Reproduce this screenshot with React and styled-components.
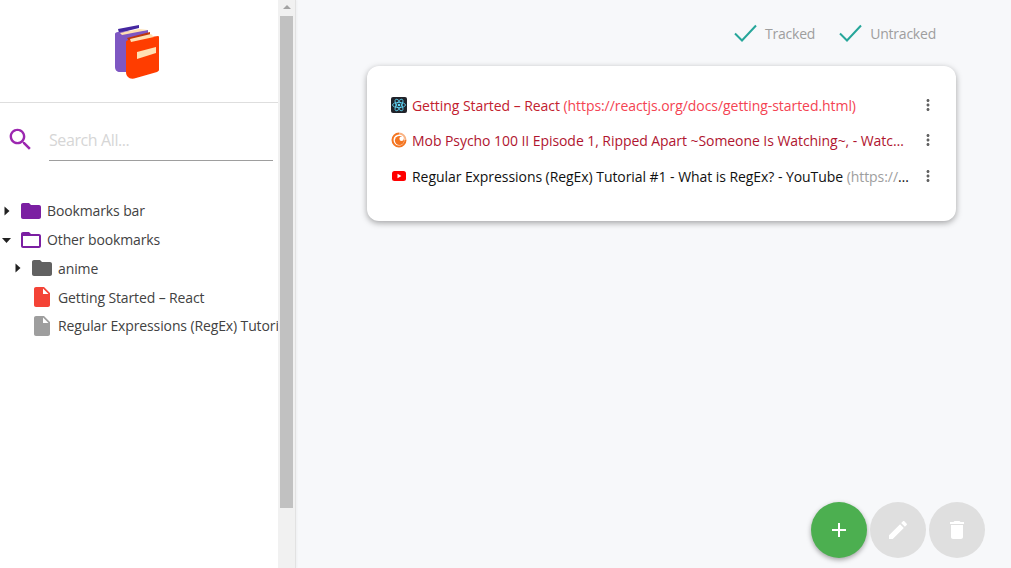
import React from 'react'
import styled, { createGlobalStyle } from 'styled-components'

const GlobalStyle = createGlobalStyle`
  html, body { margin: 0; padding: 0; height: 100%; overflow: hidden; }
  body { font-family: "Open Sans", "Noto Sans", sans-serif; }
  #root { height: 100%; }
`

const Page = styled.div`
  position: relative;
  display: flex;
  width: 1011px;
  height: 568px;
  overflow: hidden;
  background: #f7f8fa;
`
const Sidebar = styled.aside`
  width: 278px;
  flex: none;
  background: #fff;
  overflow: hidden;
`
const Header = styled.div`
  display: flex;
  align-items: center;
  justify-content: center;
  padding-right: 3px;
  box-sizing: border-box;
  border-bottom: 1px solid #dedede;
  height: 103px;
`
const SearchRow = styled.div`
  display: flex;
  align-items: flex-start;
  padding: 22px 5px 0 6px;
  height: 93.4px;
  box-sizing: border-box;
`
const SearchIcon = styled.svg`
  width: 29px;
  height: 29px;
  fill: #9c27b0;
  flex: none;
`
const SearchInput = styled.input`
  margin-left: 14px;
  width: 224px;
  height: 37px;
  margin-top: -1px;
  padding: 0 0 5px;
  box-sizing: border-box;
  border: 0;
  border-bottom: 1px solid #9e9e9e;
  outline: none;
  background: transparent;
  font: 16px "Open Sans", sans-serif;
  letter-spacing: -0.4px;
  &::placeholder { color: #d6d6d6; opacity: 1; }
`
const Tree = styled.ul`
  list-style: none;
  margin: 0;
  padding: 0;
  white-space: nowrap;
`
const TreeRow = styled.li`
  display: flex;
  align-items: center;
  height: 28.8px;
  padding-left: ${p => p.$indent}px;
  font-size: 14px;
  letter-spacing: -0.12px;
  color: #424242;
`
const Arrow = styled.svg`
  width: 11px;
  height: 10px;
  flex: none;
  margin-left: ${p => p.$offset || 0}px;
  fill: #212121;
`
const NodeIcon = styled.svg`
  width: 24px;
  height: 24px;
  flex: none;
  margin: 0 4px 0 ${p => p.$gap}px;
  fill: ${p => p.$color};
`
const Track = styled.div`
  width: 17px;
  flex: none;
  display: flex;
  flex-direction: column;
  background: #f1f1f1;
  border-right: 1px solid #e2e2e2;
  box-shadow: 1px 0 2px rgba(0, 0, 0, 0.04);
`
const TrackArrow = styled.div`
  height: 16px;
  display: flex;
  justify-content: center;
  padding-top: 5px;
  box-sizing: border-box;
  &::before {
    content: '';
    border-left: 4px solid transparent;
    border-right: 4px solid transparent;
    border-bottom: 4px solid #a3a3a3;
    height: 0;
  }
`
const Thumb = styled.div`
  height: 492px;
  margin-left: 2px;
  width: 13px;
  background: #c1c1c1;
`
const Main = styled.main`
  flex: 1;
  padding: 0 54px 0 71px;
  box-sizing: border-box;
  min-width: 0;
`
const Filters = styled.div`
  height: 66px;
  display: flex;
  justify-content: flex-end;
  align-items: center;
  padding: 0 21px 0 0;
  gap: 24px;
`
const Filter = styled.label`
  display: flex;
  align-items: center;
  gap: 8px;
  font-size: 14px;
  letter-spacing: -0.22px;
  color: #9e9e9e;
`
const Check = styled.svg`
  width: 23px;
  height: 18px;
  fill: none;
  stroke: #26a69a;
  stroke-width: 2;
`
const Card = styled.section`
  width: 589px;
  height: 155px;
  box-sizing: border-box;
  padding: 21px 16px 0 24px;
  background: #fff;
  border-radius: 12px;
  box-shadow: 0 2px 6px rgba(0, 0, 0, 0.35);
`
const LinkRow = styled.div`
  display: flex;
  align-items: center;
  height: 35.5px;
`
const Favicon = styled.svg`
  width: 16px;
  height: 16px;
  flex: none;
  margin-right: 5px;
`
const LinkText = styled.div`
  width: 499px;
  flex: none;
  padding-top: 1px;
  font-size: 14px;
  letter-spacing: -0.06px;
  white-space: nowrap;
  overflow: hidden;
  text-overflow: ellipsis;
  color: ${p => p.$color};
`
const Url = styled.span`
  color: ${p => p.$color};
`
const Kebab = styled.svg`
  width: 18px;
  height: 18px;
  margin-left: 8px;
  fill: #616161;
  flex: none;
`
const Fabs = styled.div`
  position: absolute;
  right: 26px;
  bottom: 10px;
  display: flex;
  gap: 3px;
`
const Fab = styled.button`
  width: 56px;
  height: 56px;
  padding: 0;
  border: 0;
  border-radius: 50%;
  display: flex;
  align-items: center;
  justify-content: center;
  background: ${p => (p.$primary ? '#4caf50' : '#dfdfdf')};
  box-shadow: ${p => (p.$primary ? '0 2px 5px rgba(0,0,0,.35)' : 'none')};
  svg { width: 24px; height: 24px; fill: #fff; }
`

const FOLDER = 'M10 4H4c-1.1 0-1.99.9-1.99 2L2 18c0 1.1.9 2 2 2h16c1.1 0 2-.9 2-2V8c0-1.1-.9-2-2-2h-8l-2-2z'
const FOLDER_OPEN = 'M20 6h-8l-2-2H4c-1.1 0-1.99.9-1.99 2L2 18c0 1.1.9 2 2 2h16c1.1 0 2-.9 2-2V8c0-1.1-.9-2-2-2zm0 12H4V8h16v10z'
const FILE = 'M6 2c-1.1 0-1.99.9-1.99 2L4 20c0 1.1.89 2 1.99 2H18c1.1 0 2-.9 2-2V8l-6-6H6zm7 7V3.5L18.5 9H13z'

const tree = [
  { label: 'Bookmarks bar', indent: 2, arrow: 'right', gap: 6, icon: FOLDER, color: '#7b1fa2' },
  { label: 'Other bookmarks', indent: 0, arrow: 'down', offset: 1, gap: 7, icon: FOLDER_OPEN, color: '#7b1fa2' },
  { label: 'anime', indent: 13, arrow: 'right', gap: 6, icon: FOLDER, color: '#616161' },
  { label: 'Getting Started – React', indent: 30, icon: FILE, color: '#f44336' },
  { label: 'Regular Expressions (RegEx) Tutorial #1 - What is RegEx? - YouTube', indent: 30, icon: FILE, color: '#9e9e9e' },
]

const BooksLogo = () => (
  <svg width="55" height="60" viewBox="110 20 55 60">
    <path d="M118 28 139 24v3l-20 5z" fill="#4527a0" />
    <path d="M118 31 148 29v5l-4 37-24 0c-3 0-5-2-5-5V33c0-1 1-2 3-2z" fill="#7e57c2" />
    <path d="M120 32 139 28l9 1-26 5z" fill="#ffe0b2" />
    <path d="M127 37 150 31v3l-21 6z" fill="#bf360c" />
    <path d="M129 39 158 35c1 0 1 1 1 1v33c0 1-1 1-2 2l-21 6c-6 2-10-1-10-6V41c0-1 1-2 3-2z" fill="#ff3d00" />
    <path d="M130 38 151 33l2 2 1 1-23 5z" fill="#ffe0b2" />
    <path d="M137 51 156 46v6l-19 6z" fill="#ffe0b2" />
  </svg>
)

const ReactIcon = () => (
  <Favicon viewBox="0 0 16 16">
    <rect width="16" height="16" rx="2" fill="#20232a" />
    <g fill="none" stroke="#61dafb" strokeWidth=".8">
      <ellipse cx="8" cy="8" rx="6.5" ry="2.6" />
      <ellipse cx="8" cy="8" rx="6.5" ry="2.6" transform="rotate(60 8 8)" />
      <ellipse cx="8" cy="8" rx="6.5" ry="2.6" transform="rotate(120 8 8)" />
    </g>
    <circle cx="8" cy="8" r="1.3" fill="#61dafb" />
  </Favicon>
)

const CrunchyIcon = () => (
  <Favicon viewBox="0 0 16 16">
    <path d="M8 .5a7.5 7.5 0 1 0 7.5 7.5h-2A5.5 5.5 0 1 1 8 2.5z" fill="#f47521" />
    <path d="M15.5 8A7.5 7.5 0 0 0 8 .5v2A5.5 5.5 0 0 1 13.5 8z" fill="#f9b384" />
    <circle cx="8.5" cy="8.5" r="4.6" fill="#f47521" />
    <circle cx="10.6" cy="6.8" r="2.2" fill="#fff" />
  </Favicon>
)

const YoutubeIcon = () => (
  <Favicon viewBox="0 0 16 16">
    <rect x="1" y="3" width="14" height="10" rx="2.5" fill="#f00" />
    <path d="M6.5 5.8v4.4L10.4 8z" fill="#fff" />
  </Favicon>
)

const links = [
  {
    icon: <ReactIcon />,
    title: 'Getting Started – React',
    url: '(https://reactjs.org/docs/getting-started.html)',
    color: '#c2202e',
    urlColor: '#f44352',
  },
  {
    icon: <CrunchyIcon />,
    title: 'Mob Psycho 100 II Episode 1, Ripped Apart ~Someone Is Watching~, - Watch on Crunchyroll',
    url: '(https://www.crunchyroll.com/mob-psycho-100)',
    color: '#b0152f',
    urlColor: '#f44336',
  },
  {
    icon: <YoutubeIcon />,
    title: 'Regular Expressions (RegEx) Tutorial #1 - What is RegEx? - YouTube',
    url: '(https://www.youtube.com/watch?v=rhzKDrUiJVk)',
    color: '#111',
    urlColor: '#9e9e9e',
  },
]

const KEBAB = 'M12 8c1.1 0 2-.9 2-2s-.9-2-2-2-2 .9-2 2 .9 2 2 2zm0 2c-1.1 0-2 .9-2 2s.9 2 2 2 2-.9 2-2-.9-2-2-2zm0 6c-1.1 0-2 .9-2 2s.9 2 2 2 2-.9 2-2-.9-2-2-2z'

export default function App() {
  return (
    <Page>
      <GlobalStyle />
      <Sidebar>
        <Header>
          <BooksLogo />
        </Header>
        <SearchRow>
          <SearchIcon viewBox="0 0 24 24">
            <path d="M15.5 14h-.79l-.28-.27C15.41 12.59 16 11.11 16 9.5 16 5.91 13.09 3 9.5 3S3 5.91 3 9.5 5.91 16 9.5 16c1.61 0 3.09-.59 4.23-1.57l.27.28v.79l5 4.99L20.49 19l-4.99-5zm-6 0C7.01 14 5 11.99 5 9.5S7.01 5 9.5 5 14 7.01 14 9.5 11.99 14 9.5 14z" />
          </SearchIcon>
          <SearchInput placeholder="Search All..." />
        </SearchRow>
        <Tree>
          {tree.map(n => (
            <TreeRow key={n.label} $indent={n.indent}>
              {n.arrow === 'right' && (
                <Arrow viewBox="0 0 11 10"><path d="M2.5 0.5 7.5 5 2.5 9.5z" /></Arrow>
              )}
              {n.arrow === 'down' && (
                <Arrow $offset={n.offset} viewBox="0 0 11 10"><path d="M1 3h9L5.5 8z" /></Arrow>
              )}
              <NodeIcon viewBox="0 0 24 24" $color={n.color} $gap={n.gap || 0}>
                <path d={n.icon} />
              </NodeIcon>
              {n.label}
            </TreeRow>
          ))}
        </Tree>
      </Sidebar>
      <Track>
        <TrackArrow />
        <Thumb />
      </Track>
      <Main>
        <Filters>
          <Filter>
            <Check viewBox="0 0 23 18"><path d="M1 9.5 8 16.5 22 1.5" /></Check>
            Tracked
          </Filter>
          <Filter>
            <Check viewBox="0 0 23 18"><path d="M1 9.5 8 16.5 22 1.5" /></Check>
            Untracked
          </Filter>
        </Filters>
        <Card>
          {links.map(l => (
            <LinkRow key={l.title}>
              {l.icon}
              <LinkText $color={l.color}>
                {l.title} <Url $color={l.urlColor}>{l.url}</Url>
              </LinkText>
              <Kebab viewBox="0 0 24 24"><path d={KEBAB} /></Kebab>
            </LinkRow>
          ))}
        </Card>
      </Main>
      <Fabs>
        <Fab $primary>
          <svg viewBox="0 0 24 24"><path d="M19 13h-6v6h-2v-6H5v-2h6V5h2v6h6v2z" /></svg>
        </Fab>
        <Fab>
          <svg viewBox="0 0 24 24"><path d="M3 17.25V21h3.75L17.81 9.94l-3.75-3.75L3 17.25zM20.71 7.04c.39-.39.39-1.02 0-1.41l-2.34-2.34c-.39-.39-1.02-.39-1.41 0l-1.83 1.83 3.75 3.75 1.83-1.83z" /></svg>
        </Fab>
        <Fab>
          <svg viewBox="0 0 24 24"><path d="M6 19c0 1.1.9 2 2 2h8c1.1 0 2-.9 2-2V7H6v12zM19 4h-3.5l-1-1h-5l-1 1H5v2h14V4z" /></svg>
        </Fab>
      </Fabs>
    </Page>
  )
}
